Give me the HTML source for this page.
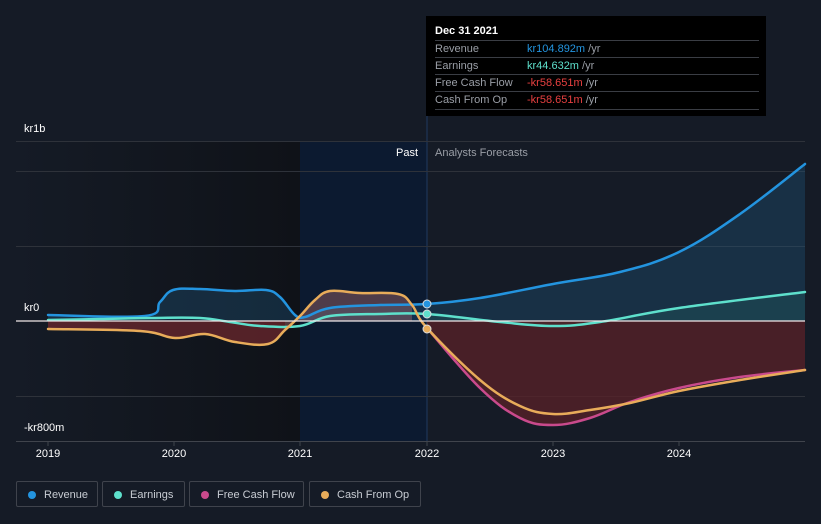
<!DOCTYPE html>
<html><head><meta charset="utf-8"><style>
body{margin:0;background:#151b26;width:821px;height:524px;overflow:hidden;font-family:"Liberation Sans",sans-serif;position:relative}
.lbl{position:absolute;color:#fff;font-size:11px}
.tt{position:absolute;left:426px;top:16px;width:340px;height:100px;background:#000;}
.tt .h{position:absolute;left:9px;top:9px;color:#fff;font-size:11px;font-weight:bold}
.row{position:absolute;left:9px;width:324px;height:17px;border-top:1px solid #3a3d44;font-size:11px;color:#9a9ea6;line-height:17px}
.row span.v{position:absolute;left:92px}
.leg{position:absolute;top:481px;height:26px;border:1px solid #3f434c;border-radius:2px;color:#c8ccd3;font-size:11px;line-height:26px;box-sizing:border-box}
.leg i{position:absolute;left:11px;top:9px;width:8px;height:8px;border-radius:50%}
.leg span{position:absolute;left:27px}
.yr{position:absolute;top:448px;color:#fff;font-size:11px;transform:translateX(-50%)}
</style></head><body>
<svg id="s" width="821" height="524" style="position:absolute;left:0;top:0">
<defs>
<linearGradient id="dk" x1="0" x2="1"><stop offset="0" stop-color="#151b26"/><stop offset="1" stop-color="#0f1218"/></linearGradient>
</defs>
<rect x="16" y="141" width="284" height="300" fill="url(#dk)"/>
<rect x="300" y="141" width="127" height="300" fill="#0c1a30"/>
<line x1="427" y1="16" x2="427" y2="441" stroke="#1f3a60" stroke-width="1"/>
<g stroke="#2e323a" stroke-width="1">
<line x1="16" y1="141.5" x2="805" y2="141.5"/><line x1="16" y1="171.5" x2="805" y2="171.5"/>
<line x1="16" y1="246.5" x2="805" y2="246.5"/><line x1="16" y1="396.5" x2="805" y2="396.5"/>
</g>
<line x1="16" y1="441.5" x2="805" y2="441.5" stroke="#40444c"/>
<g stroke="#40444c"><line x1="48" y1="441" x2="48" y2="446"/><line x1="174" y1="441" x2="174" y2="446"/><line x1="300" y1="441" x2="300" y2="446"/><line x1="427" y1="441" x2="427" y2="446"/><line x1="553" y1="441" x2="553" y2="446"/><line x1="679" y1="441" x2="679" y2="446"/></g>
<g id="fills"></g>
<g id="lines" fill="none" stroke-width="2.5" stroke-linejoin="round" stroke-linecap="round"></g>
<line x1="16" y1="321" x2="805" y2="321" stroke="#f0e8e8" stroke-width="1.2"/>
<circle cx="427" cy="304" r="4" fill="#2394df" stroke="#ddd" stroke-width="1"/>
<circle cx="427" cy="314" r="4" fill="#5ee0cc" stroke="#ddd" stroke-width="1"/>
<circle cx="427" cy="329" r="4" fill="#e8ac5a" stroke="#ddd" stroke-width="1"/>
</svg>
<script>
function smooth(p){var d="M"+p[0][0]+","+p[0][1];for(var i=0;i<p.length-1;i++){var p0=p[i-1]||p[i],p1=p[i],p2=p[i+1],p3=p[i+2]||p2;var t=0.18;d+=" C"+(p1[0]+(p2[0]-p0[0])*t)+","+(p1[1]+(p2[1]-p0[1])*t)+" "+(p2[0]-(p3[0]-p1[0])*t)+","+(p2[1]-(p3[1]-p1[1])*t)+" "+p2[0]+","+p2[1];}return d;}
var rev=[[48,315],[145,316],[160,302],[173,290],[200,289],[235,291],[266,290],[280,297],[295,315],[305,317],[330,308],[380,305],[427,304],[480,298],[553,284],[620,272],[679,252],[740,214],[805,164]];
var ear=[[48,320],[100,319],[150,318],[200,318],[230,322],[260,326],[300,326],[330,316],[380,314],[427,314],[500,322],[553,326],[600,322],[679,308],[805,292]];
var cfo=[[48,329],[140,331],[175,338],[205,334],[235,342],[268,344],[285,330],[300,316],[315,300],[330,291],[360,293],[398,294],[412,305],[427,328],[480,380],[520,406],[553,414],[590,410],[630,403],[679,391],[740,380],[805,370]];
var fcfF=[[427,328],[480,388],[520,418],[553,425],[590,418],[630,402],[679,388],[740,377],[805,370]];
var fcf=cfo.slice(0,14).concat(fcfF.slice(1));
var NS="http://www.w3.org/2000/svg";
function add(g,d,a){var e=document.createElementNS(NS,"path");e.setAttribute("d",d);for(var k in a)e.setAttribute(k,a[k]);document.getElementById(g).appendChild(e);}
function area(p){var d=smooth(p);return d+" L"+p[p.length-1][0]+",321 L"+p[0][0]+",321 Z";}
add("fills",area(rev),{fill:"#1f5a80","fill-opacity":"0.35"});
add("fills",area(ear.slice(9)),{fill:"#2a7a70","fill-opacity":"0.22"});
add("fills",area(cfo.slice(0,7)),{fill:"#7a2a30","fill-opacity":"0.65"});
add("fills",area(cfo.slice(6,13)),{fill:"#b57070","fill-opacity":"0.4"});
add("fills",area(fcfF),{fill:"#5a2228","fill-opacity":"0.75"});
add("lines",smooth(rev),{stroke:"#2394df"});
add("lines",smooth(ear),{stroke:"#5ee0cc"});
add("lines",smooth(fcfF),{stroke:"#c94a8c"});
add("lines",smooth(cfo),{stroke:"#e8ac5a"});
</script>
<div class="lbl" style="left:24px;top:123px">kr1b</div>
<div class="lbl" style="left:24px;top:302px">kr0</div>
<div class="lbl" style="left:24px;top:422px">-kr800m</div>
<div class="lbl" style="left:396px;top:147px">Past</div>
<div class="lbl" style="left:435px;top:147px;color:#9a9ea6">Analysts Forecasts</div>
<div class="yr" style="left:48px">2019</div><div class="yr" style="left:174px">2020</div><div class="yr" style="left:300px">2021</div><div class="yr" style="left:427px">2022</div><div class="yr" style="left:553px">2023</div><div class="yr" style="left:679px">2024</div>
<div class="tt">
<div class="h">Dec 31 2021</div>
<div class="row" style="top:24px">Revenue<span class="v"><span style="color:#2394df">kr104.892m</span> /yr</span></div>
<div class="row" style="top:41px">Earnings<span class="v"><span style="color:#5ee0cc">kr44.632m</span> /yr</span></div>
<div class="row" style="top:58px">Free Cash Flow<span class="v"><span style="color:#e84040">-kr58.651m</span> /yr</span></div>
<div class="row" style="top:75px;border-bottom:1px solid #3a3d44">Cash From Op<span class="v"><span style="color:#e84040">-kr58.651m</span> /yr</span></div>
</div>
<div class="leg" style="left:16px;width:82px"><i style="background:#2394df"></i><span>Revenue</span></div>
<div class="leg" style="left:102px;width:83px"><i style="background:#5ee0cc"></i><span>Earnings</span></div>
<div class="leg" style="left:189px;width:115px"><i style="background:#c94a8c"></i><span>Free Cash Flow</span></div>
<div class="leg" style="left:309px;width:112px"><i style="background:#e8ac5a"></i><span>Cash From Op</span></div>
</body></html>
